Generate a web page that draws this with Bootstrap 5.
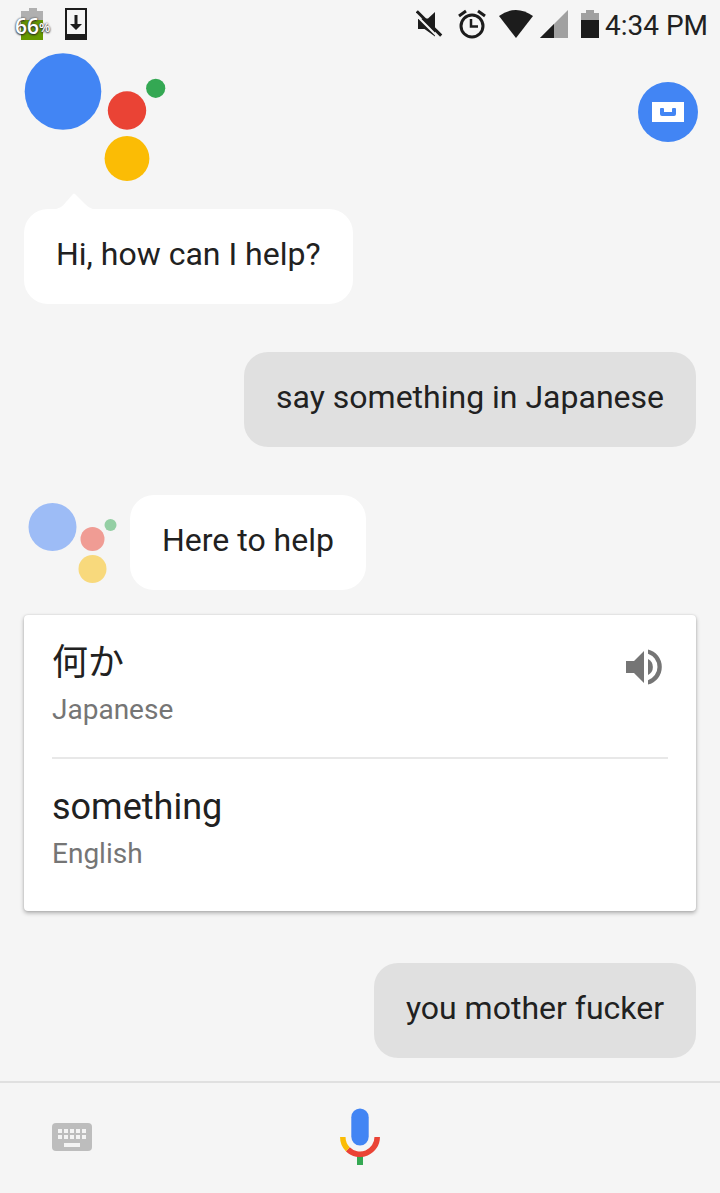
<!DOCTYPE html>
<html lang="en">
<head>
<meta charset="utf-8">
<meta name="viewport" content="width=device-width, initial-scale=1">
<title>Assistant</title>
<link rel="stylesheet" href="https://cdn.jsdelivr.net/npm/bootstrap@5.3.0/dist/css/bootstrap.min.css">
<style>
  body { background: #f5f5f5; color: #212121; font-family: Roboto, "Noto Sans CJK JP", sans-serif; }
  svg { display: block; flex: none; }
  .status-bar { height: 50px; padding: 0 12px 0 15px; font-size: 28px; }
  .clock { line-height: 48px; padding-top: 2px; }
  .charge { width: 34px; height: 34px; }
  .charge-text { left: 0; top: 6px; font: 600 21px/24px "Open Sans", sans-serif; color: #fff; text-shadow: 0 1px 2px #222, 0 0 2px #444; }
  .charge-text span { font-size: 13px; vertical-align: 2px; }
  .app-head { height: 159px; padding: 3px 22px 0 24px; }
  .round-btn { width: 60px; height: 60px; margin-top: 29px; background: #4285f4; }
  .chat { padding: 0 24px; }
  .bubble { padding: 23px 32px 28px; border-radius: 24px; font-size: 32px; line-height: 44px; background: #fff; }
  .bubble.mine { background: #e0e0e0; }
  .tail { left: 24px; top: -16px; }
  .turn { margin-bottom: 48px; }
  .turn.reply { margin-bottom: 25px; }
  .avatar { margin: 8px 13px 0 4px; }
  .result { margin-bottom: 52px; padding: 0 28px; border-radius: 4px; background: #fff; box-shadow: 0 2px 4px rgba(0,0,0,.3), 0 0 2px rgba(0,0,0,.12); }
  .entry { padding: 25px 0 23px; }
  .entry + .entry { padding-bottom: 33px; border-top: 2px solid #e8e8e8; }
  .phrase { font-size: 36px; line-height: 46px; }
  .lang { font-size: 28px; line-height: 48px; color: #757575; }
  .speak { margin: 9px 5px 0 0; }
  .input-bar { height: 112px; padding-bottom: 2px; border-top: 2px solid #e0e0e0; }
  .input-bar .keys { padding-left: 52px; }
</style>
</head>
<body>
<div class="d-flex flex-column min-vh-100">
  <div class="status-bar d-flex justify-content-between align-items-center">
    <div class="d-flex align-items-center gap-3">
      <div class="charge position-relative">
        <svg width="34" height="34" aria-hidden="true"><path d="M6 3h8V0h8v3h6v11H6z" fill="#b0b0b0"/><path d="M6 12h22v20H6z" fill="#669900"/></svg>
        <div class="charge-text position-absolute">66<span>%</span></div>
      </div>
      <svg width="22" height="34" aria-hidden="true"><path fill="#1c1c1c" fill-rule="evenodd" d="M0 0h22v32H0zM2 2v24h18V2z"/><path fill="#1c1c1c" d="M9.500 7h3v9H17l-6 6-6-6h4.500z"/></svg>
    </div>
    <div class="d-flex align-items-center">
      <svg width="189" height="34" viewBox="416 8 189 34" fill="#1c1c1c" aria-hidden="true">
        <path d="M418 19v10h6.500l10.500 7.500V12l-7 6.500z"/><path d="M414 13l24.500 24.500" stroke="#f5f5f5" stroke-width="2"/><path d="M416.800 11.200l24.400 24.400" stroke="#1c1c1c" stroke-width="3"/>
        <circle cx="472" cy="26" r="11" fill="none" stroke="#1c1c1c" stroke-width="3"/><path d="M459 16l7-5M485 16l-7-5" stroke="#1c1c1c" stroke-width="3"/><path d="M471 19v7.500h7" fill="none" stroke="#1c1c1c" stroke-width="2.500"/>
        <path d="M499 16q17-12 34 0l-17 22z"/>
        <path d="M568 10v28h-28z" fill="#a0a0a0"/><path d="M540 38l14-14v14z"/>
        <path d="M581 13h5v-3h8v3h5v8h-18z" fill="#a0a0a0"/><path d="M581 20h18v18h-18z"/>
      </svg>
      <span class="clock">4:34 PM</span>
    </div>
  </div>

  <header class="app-head d-flex justify-content-between align-items-start">
    <svg width="142" height="129" viewBox="24 53 142 129" role="img" aria-label="Assistant">
      <circle cx="63" cy="91.500" r="38.300" fill="#4285f4"/><circle cx="127" cy="110.500" r="19.200" fill="#ea4335"/><circle cx="155.700" cy="88.300" r="9.600" fill="#34a853"/><circle cx="127" cy="158.500" r="22.400" fill="#fbbc05"/>
    </svg>
    <button type="button" class="round-btn btn border-0 rounded-circle p-0 d-flex align-items-center justify-content-center" aria-label="Explore">
      <svg width="32" height="20"><path fill="#fff" d="M0 0h32v20H0z"/><path fill="#4285f4" d="M8 7q0-1 1-1h2q1 0 1 1v3h8V7q0-1 1-1h2q1 0 1 1v5q0 2-2 2H10q-2 0-2-2z"/></svg>
    </button>
  </header>

  <main class="chat">
    <div class="turn d-flex">
      <div class="bubble position-relative">
        <svg class="tail position-absolute" width="50" height="17" aria-hidden="true"><path fill="#fff" d="M2 17C12 16 15 13 18 9L25 1q1-1 2 0l8 8c4 4 7 7 15 8z"/></svg>
        Hi, how can I help?
      </div>
    </div>
    <div class="turn d-flex justify-content-end"><div class="bubble mine">say something in Japanese</div></div>
    <div class="turn reply d-flex align-items-start">
      <svg class="avatar" width="89" height="80" viewBox="28 503 89 80" role="img" aria-label="Assistant">
        <circle cx="52.500" cy="527" r="24" fill="#9dbcf6"/><circle cx="92.500" cy="539" r="12" fill="#f09c94"/><circle cx="110.500" cy="525" r="6" fill="#94cfa4"/><circle cx="92.500" cy="569" r="14" fill="#f8d97c"/>
      </svg>
      <div class="bubble">Here to help</div>
    </div>
    <section class="result">
      <div class="entry d-flex justify-content-between align-items-start">
        <div><div class="phrase" lang="ja">何か</div><div class="lang">Japanese</div></div>
        <button type="button" class="speak btn border-0 p-0" aria-label="Listen">
          <svg width="37" height="36" viewBox="626 649 37 36" fill="#757575"><path d="M626 661h8l10-10v32l-10-10h-8z"/><path d="M648 659a9 9 0 0 1 0 16z"/><path d="M648 649.500a18 18 0 0 1 0 35v-4.300a14 14 0 0 0 0-26.500z"/></svg>
        </button>
      </div>
      <div class="entry"><div class="phrase">something</div><div class="lang">English</div></div>
    </section>
    <div class="d-flex justify-content-end"><div class="bubble mine">you mother fucker</div></div>
  </main>

  <footer class="input-bar row g-0 align-items-center mt-auto">
    <div class="col-4 keys">
      <button type="button" class="btn border-0 p-0" aria-label="Keyboard">
        <svg width="40" height="28"><rect width="40" height="28" rx="4" fill="#bdbdbd"/><path d="M6 8h28M6 14h28" stroke="#f4f4f4" stroke-width="4" stroke-dasharray="4 2"/><path d="M12 20h16v4H12z" fill="#f4f4f4"/></svg>
      </button>
    </div>
    <div class="col-4 d-flex justify-content-center">
      <button type="button" class="btn border-0 p-0" aria-label="Speak">
        <svg width="40" height="58" viewBox="340 1108 40 58" fill="none" stroke-width="5.500"><path d="M357 1154h6v11h-6z" fill="#34a853"/><path d="M377.200 1137a17.200 17.200 0 0 1-29.400 12.200" stroke="#ea4335"/><path d="M342.800 1137a17.200 17.200 0 0 0 5 12.200" stroke="#fbbc05"/><rect x="351.300" y="1108.500" width="17.400" height="37" rx="8.700" fill="#4285f4"/></svg>
      </button>
    </div>
  </footer>
</div>
<script src="https://cdn.jsdelivr.net/npm/bootstrap@5.3.0/dist/js/bootstrap.bundle.min.js"></script>
</body>
</html>
